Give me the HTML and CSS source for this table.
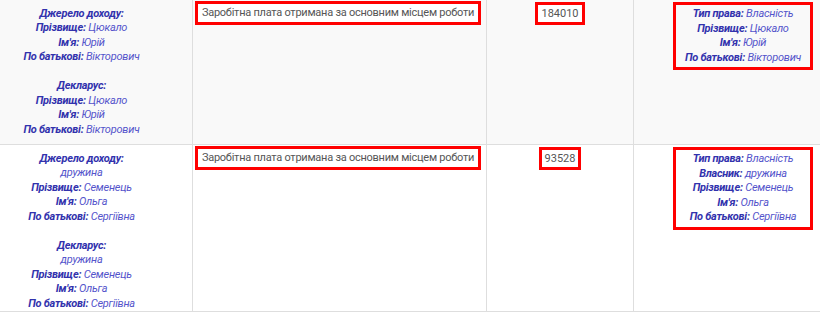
FILE: index.html
```html
<!DOCTYPE html>
<html lang="uk">
<head>
<meta charset="utf-8">
<link rel="stylesheet" href="styles.css">
</head>
<body>
<div class="table">
  <div class="row odd">
    <div class="cell person">
      <div><b>Джерело доходу:</b></div>
      <div><b>Прізвище:</b> <i>Цюкало</i></div>
      <div><b>Ім'я:</b> <i>Юрій</i></div>
      <div><b>По батькові:</b> <i>Вікторович</i></div>
      <div class="gap"></div>
      <div><b>Декларус:</b></div>
      <div><b>Прізвище:</b> <i>Цюкало</i></div>
      <div><b>Ім'я:</b> <i>Юрій</i></div>
      <div><b>По батькові:</b> <i>Вікторович</i></div>
    </div>
    <div class="cell mid"><span class="box plain">Заробітна плата отримана за основним місцем роботи</span></div>
    <div class="cell num"><span class="box plain">184010</span></div>
    <div class="cell right">
      <div class="box person">
        <div><b>Тип права:</b> <i>Власність</i></div>
        <div><b>Прізвище:</b> <i>Цюкало</i></div>
        <div><b>Ім'я:</b> <i>Юрій</i></div>
        <div><b>По батькові:</b> <i>Вікторович</i></div>
      </div>
    </div>
  </div>
  <div class="row">
    <div class="cell person">
      <div><b>Джерело доходу:</b></div>
      <div><i>дружина</i></div>
      <div><b>Прізвище:</b> <i>Семенець</i></div>
      <div><b>Ім'я:</b> <i>Ольга</i></div>
      <div><b>По батькові:</b> <i>Сергіївна</i></div>
      <div class="gap"></div>
      <div><b>Декларус:</b></div>
      <div><i>дружина</i></div>
      <div><b>Прізвище:</b> <i>Семенець</i></div>
      <div><b>Ім'я:</b> <i>Ольга</i></div>
      <div><b>По батькові:</b> <i>Сергіївна</i></div>
    </div>
    <div class="cell mid"><span class="box plain">Заробітна плата отримана за основним місцем роботи</span></div>
    <div class="cell num"><span class="box plain">93528</span></div>
    <div class="cell right">
      <div class="box person">
        <div><b>Тип права:</b> <i>Власність</i></div>
        <div><b>Власник:</b> <i>дружина</i></div>
        <div><b>Прізвище:</b> <i>Семенець</i></div>
        <div><b>Ім'я:</b> <i>Ольга</i></div>
        <div><b>По батькові:</b> <i>Сергіївна</i></div>
      </div>
    </div>
  </div>
</div>
</body>
</html>
```
FILE: styles.css
```css
html, body {
  margin: 0;
  padding: 0;
  background: #fff;
  overflow: hidden;
}
body {
  font-family: Roboto, "Liberation Sans", sans-serif;
  font-size: 11px;
  line-height: 14.5px;
  width: 820px;
}
.table {
  width: 852px;
}
.row {
  display: grid;
  grid-template-columns: 193px 294px 147px 218px;
  border-bottom: 1px solid #dedede;
}
.row.odd {
  background: #f9f9f9;
  height: 144px;
}
.cell {
  border-right: 1px solid #dedede;
  text-align: center;
  display: flex;
  flex-direction: column;
  align-items: center;
}
.cell:last-child {
  border-right: none;
}
.cell.person {
  display: block;
  padding-top: 6.5px;
  padding-right: 29px;
}
.person {
  letter-spacing: -0.25px;
}
.person b {
  font-weight: 700;
  font-style: italic;
  color: #3232ad;
}
.person i {
  font-style: italic;
  color: #5454cb;
}
.gap {
  height: 14.5px;
}
.box {
  border: 3px solid #ff0000;
  background: #fff;
}
.plain {
  display: block;
  color: #555;
  font-size: 11px;
  line-height: 16px;
  padding: 1px 4px;
  white-space: nowrap;
}
.mid {
  padding-top: 1px;
  padding-right: 3px;
}
.mid .plain {
  letter-spacing: -0.25px;
}
.num {
  padding-top: 2px;
}
.num .plain {
  line-height: 15px;
  padding: 1px 3px;
}
.right {
  padding-top: 2px;
}
.right .box {
  width: 140px;
  box-sizing: border-box;
  padding: 2px 0;
  background: transparent;
}
```
